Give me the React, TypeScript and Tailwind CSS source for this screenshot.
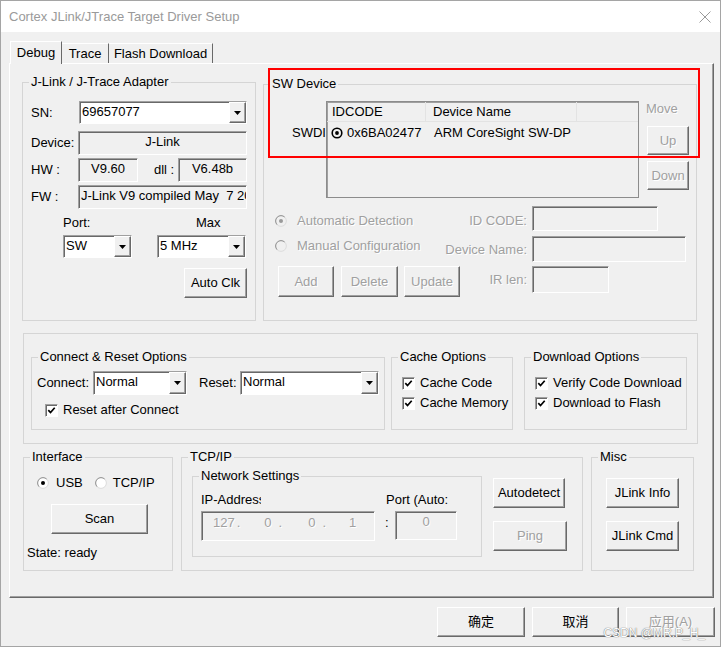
import React from 'react';

// classic win32 3D edges
const sunken = "border border-t-[#a0a0a0] border-l-[#a0a0a0] border-r-white border-b-white shadow-[inset_1px_1px_0_#696969]";
const raised = "border border-t-white border-l-white border-r-[#696969] border-b-[#696969] shadow-[inset_-1px_-1px_0_#a0a0a0]";
const grayText = "text-[#a0a0a0] [text-shadow:1px_1px_0_#ffffff]";

function Group({ title, className = '', children }: { title?: string; className?: string; children?: React.ReactNode }) {
  return (
    <div className={`relative shrink-0 border border-[#d5d5d5] ${className}`}>
      {title && (
        <span className="absolute -top-[9px] left-[6px] bg-[#f0f0f0] px-[2px] leading-[16px] whitespace-nowrap">{title}</span>
      )}
      {children}
    </div>
  );
}

function Btn({ label, className = '', disabled = false }: { label: string; className?: string; disabled?: boolean }) {
  return (
    <button type="button" className={`${raised} bg-[#f0f0f0] flex items-center justify-center shrink-0 leading-[16px] ${disabled ? grayText : 'text-black'} ${className}`}>
      {label}
    </button>
  );
}

function Combo({ value, className = '' }: { value: string; className?: string }) {
  return (
    <div className={`${sunken} bg-white flex shrink-0 h-[23px] ${className}`}>
      <span className="flex-1 pl-[2px] leading-[19px] whitespace-nowrap overflow-hidden">{value}</span>
      <span className={`${raised} bg-[#f0f0f0] w-[17px] flex items-center justify-center`}>
        <svg width="7" height="4" viewBox="0 0 7 4"><path d="M0 0h7L3.5 4z" fill="#000" /></svg>
      </span>
    </div>
  );
}

function Field({ children, className = '', center = false, disabled = false }: { children?: React.ReactNode; className?: string; center?: boolean; disabled?: boolean }) {
  return (
    <div className={`${sunken} bg-[#f0f0f0] shrink-0 flex items-center overflow-hidden whitespace-pre pb-[2px] ${center ? 'justify-center' : 'pl-[2px]'} ${disabled ? grayText : ''} ${className}`}>
      {children}
    </div>
  );
}

function Check({ label }: { label: string }) {
  return (
    <div className="flex items-center h-[14px]">
      <span className={`${sunken} bg-white w-[13px] h-[13px] flex items-center justify-center shrink-0`}>
        <svg width="9" height="9" viewBox="0 0 9 9"><path d="M1.3 4.2l2.2 2.3L7.7 1.8" stroke="#000" strokeWidth="1.7" fill="none" /></svg>
      </span>
      <span className="ml-[5px] leading-[16px] whitespace-nowrap">{label}</span>
    </div>
  );
}

function Radio({ checked = false, disabled = false }: { checked?: boolean; disabled?: boolean }) {
  return (
    <svg width="12" height="12" viewBox="0 0 12 12" className="shrink-0">
      <circle cx="6" cy="6" r="5.3" fill={disabled ? '#f0f0f0' : '#ffffff'} />
      <path d="M2.2 9.8A5.3 5.3 0 0 1 9.8 2.2" stroke="#8a8a8a" strokeWidth="1" fill="none" />
      <path d="M9.8 2.2A5.3 5.3 0 0 1 2.2 9.8" stroke="#dcdcdc" strokeWidth="1" fill="none" />
      {checked && <circle cx="6" cy="6" r="2" fill={disabled ? '#9a9a9a' : '#000'} />}
    </svg>
  );
}

export default function App() {
  return (
    <div className="w-[721px] h-[647px] bg-[#f0f0f0] border border-[#a5a5a5] flex flex-col relative overflow-hidden text-[13px] text-black font-['Liberation_Sans','Noto_Sans_CJK_SC',sans-serif]">
      {/* Title bar */}
      <div className="h-[31px] bg-white flex items-center pl-[8px] pr-[9px] shrink-0">
        <span className="text-[#9a9a9a] text-[13px]">Cortex JLink/JTrace Target Driver Setup</span>
        <svg className="ml-auto" width="12" height="12" viewBox="0 0 12 12">
          <path d="M0.5 0.5l11 11M11.5 0.5l-11 11" stroke="#9a9a9a" strokeWidth="1" />
        </svg>
      </div>

      {/* Tabs */}
      <div className="flex items-end h-[22px] mt-[9px] ml-[9px] relative z-10 shrink-0">
        <div className="w-[52px] h-[23px] -mb-[1px] bg-[#f0f0f0] border-t border-l border-r border-t-white border-l-white border-r-[#696969] flex items-center justify-center">Debug</div>
        <div className="w-[47px] h-[20px] bg-[#f0f0f0] border-t border-r border-t-white border-r-[#696969] flex items-center justify-center">Trace</div>
        <div className="w-[104px] h-[20px] bg-[#f0f0f0] border-t border-r border-t-white border-r-[#696969] flex items-center justify-center">Flash Download</div>
      </div>

      {/* Tab panel */}
      <div className="ml-[8px] w-[705px] h-[535px] shrink-0 border border-t-white border-l-white border-r-[#696969] border-b-[#696969] shadow-[inset_-1px_-1px_0_#a0a0a0] flex flex-col">
        <div className="flex pt-[18px] pl-[12px]">
          {/* J-Link adapter */}
          <Group title="J-Link / J-Trace Adapter" className="w-[234px] h-[239px]">
            <div className="flex flex-col">
              <div className="mt-[18px] flex items-center h-[23px]">
                <span className="pl-[8px] w-[56px]">SN:</span>
                <Combo value="69657077" className="w-[168px]" />
              </div>
              <div className="mt-[7px] flex items-center h-[24px]">
                <span className="pl-[8px] w-[55px]">Device:</span>
                <Field center className="w-[169px] h-[24px]">J-Link</Field>
              </div>
              <div className="mt-[3px] flex items-center h-[24px]">
                <span className="pl-[8px] w-[55px]">HW :</span>
                <Field center className="w-[60px] h-[24px]">V9.60</Field>
                <span className="ml-[16px] w-[24px]">dll :</span>
                <Field center className="w-[69px] h-[24px]">V6.48b</Field>
              </div>
              <div className="mt-[3px] flex items-center h-[24px]">
                <span className="pl-[8px] w-[55px]">FW :</span>
                <Field className="w-[169px] h-[24px]">J-Link V9 compiled May  7 2018</Field>
              </div>
              <div className="mt-[6px] flex h-[16px] leading-[16px]">
                <span className="ml-[40px] w-[133px]">Port:</span>
                <span>Max</span>
              </div>
              <div className="mt-[4px] flex h-[23px]">
                <Combo value="SW" className="ml-[40px] w-[69px]" />
                <Combo value="5 MHz" className="ml-[25px] w-[89px]" />
              </div>
              <Btn label="Auto Clk" className="mt-[10px] ml-[161px] w-[63px] h-[30px]" />
            </div>
          </Group>

          {/* SW device */}
          <Group title="SW Device" className="ml-[7px] mt-[2px] w-[434px] h-[237px]">
            <div className="flex mt-[16px]">
              <span className="pl-[28px] w-[62px] pt-[24px] leading-[16px] overflow-hidden whitespace-nowrap shrink-0">SWDI</span>
              <div className="w-[313px] h-[97px] shrink-0 border border-[#8c8c8c] shadow-[inset_1px_1px_0_#a0a0a0] flex flex-col">
                <div className="flex h-[20px] border-b border-[#e3e3e3] leading-[16px]">
                  <div className="w-[99px] border-r border-[#e3e3e3] pl-[5px] flex items-center">IDCODE</div>
                  <div className="w-[151px] border-r border-[#e3e3e3] pl-[7px] flex items-center">Device Name</div>
                  <div className="flex-1" />
                </div>
                <div className="flex h-[20px] mt-[1px] items-center">
                  <div className="w-[99px] pl-[4px] flex items-center">
                    <svg width="12" height="12" viewBox="0 0 12 12">
                      <circle cx="6" cy="6" r="4.8" stroke="#000" strokeWidth="1.6" fill="none" />
                      <circle cx="6" cy="6" r="1.9" fill="#000" />
                    </svg>
                    <span className="ml-[4px]">0x6BA02477</span>
                  </div>
                  <div className="pl-[8px]">ARM CoreSight SW-DP</div>
                </div>
              </div>
              <div className="ml-[8px] flex flex-col">
                <span className={`${grayText} leading-[16px] -ml-[1px]`}>Move</span>
                <Btn disabled label="Up" className="mt-[9px] w-[42px] h-[29px]" />
                <Btn disabled label="Down" className="mt-[6px] w-[42px] h-[29px]" />
              </div>
            </div>
            <div className="flex">
              <div className="flex flex-col pl-[11px] mt-[13px] w-[196px] shrink-0">
                <div className="flex items-center h-[20px]">
                  <Radio checked disabled />
                  <span className={`ml-[10px] whitespace-nowrap ${grayText}`}>Automatic Detection</span>
                </div>
                <div className="flex items-center h-[20px] mt-[5px]">
                  <Radio disabled />
                  <span className={`ml-[10px] whitespace-nowrap ${grayText}`}>Manual Configuration</span>
                </div>
                <div className="flex mt-[10px]">
                  <Btn disabled label="Add" className="ml-[3px] w-[56px] h-[31px]" />
                  <Btn disabled label="Delete" className="ml-[7px] w-[57px] h-[31px]" />
                  <Btn disabled label="Update" className="ml-[6px] w-[56px] h-[31px]" />
                </div>
              </div>
              <div className="flex flex-col mt-[8px]">
                <div className="flex items-center h-[25px]">
                  <span className={`w-[67px] flex justify-end whitespace-nowrap pt-[4px] ${grayText}`}>ID CODE:</span>
                  <Field className="ml-[5px] w-[126px] h-[25px]" />
                </div>
                <div className="flex items-center h-[26px] mt-[5px]">
                  <span className={`w-[67px] flex justify-end whitespace-nowrap pt-[2px] ${grayText}`}>Device Name:</span>
                  <Field className="ml-[5px] w-[154px] h-[26px]" />
                </div>
                <div className="flex items-center h-[27px] mt-[4px]">
                  <span className={`w-[67px] flex justify-end whitespace-nowrap ${grayText}`}>IR len:</span>
                  <Field className="ml-[5px] w-[77px] h-[27px]" />
                </div>
              </div>
            </div>
          </Group>
        </div>

        {/* middle options */}
        <div className="mt-[12px] ml-[13px] w-[675px] h-[111px] shrink-0 border border-[#d5d5d5] flex items-start pt-[23px] pl-[7px]">
          <Group title="Connect & Reset Options" className="w-[354px] h-[73px]">
            <div className="flex items-center h-[24px] mt-[13px] pl-[5px]">
              <span className="w-[56px]">Connect:</span>
              <Combo value="Normal" className="w-[94px] h-[24px]" />
              <span className="ml-[12px] w-[41px]">Reset:</span>
              <Combo value="Normal" className="w-[139px] h-[24px]" />
            </div>
            <div className="mt-[8px] pl-[13px]">
              <Check label="Reset after Connect" />
            </div>
          </Group>
          <Group title="Cache Options" className="ml-[6px] w-[122px] h-[73px]">
            <div className="flex flex-col gap-[6px] mt-[18px] pl-[10px]">
              <Check label="Cache Code" />
              <Check label="Cache Memory" />
            </div>
          </Group>
          <Group title="Download Options" className="ml-[11px] w-[163px] h-[73px]">
            <div className="flex flex-col gap-[6px] mt-[18px] pl-[10px]">
              <Check label="Verify Code Download" />
              <Check label="Download to Flash" />
            </div>
          </Group>
        </div>

        {/* bottom row */}
        <div className="flex items-start mt-[13px] pl-[13px]">
          <Group title="Interface" className="w-[150px] h-[114px]">
            <div className="flex items-center h-[14px] mt-[18px] pl-[13px]">
              <Radio checked />
              <span className="ml-[7px]">USB</span>
              <span className="ml-[12px] flex"><Radio /></span>
              <span className="ml-[6px]">TCP/IP</span>
            </div>
            <Btn label="Scan" className="mt-[14px] ml-[27px] w-[97px] h-[30px]" />
            <div className="mt-[11px] pl-[3px] leading-[16px]">State: ready</div>
          </Group>
          <Group title="TCP/IP" className="ml-[8px] w-[402px] h-[114px]">
            <div className="flex items-start">
              <Group title="Network Settings" className="ml-[10px] mt-[18px] w-[290px] h-[81px]">
                <div className="flex">
                  <div className="flex flex-col ml-[8px]">
                    <span className="mt-[15px] w-[60px] leading-[16px] overflow-hidden whitespace-nowrap">IP-Address</span>
                    <div className={`${sunken} bg-[#f0f0f0] mt-[3px] w-[174px] h-[30px] flex items-start pt-[3px] pl-[11px] leading-[16px] ${grayText}`}>
                      <span>127</span>
                      <span className="ml-[2px]">.</span>
                      <span className="ml-[24px]">0</span>
                      <span className="ml-[7px]">.</span>
                      <span className="ml-[26px]">0</span>
                      <span className="ml-[7px]">.</span>
                      <span className="ml-[23px]">1</span>
                    </div>
                  </div>
                  <div className="flex flex-col ml-[10px]">
                    <span className="mt-[15px] leading-[16px] whitespace-nowrap pl-[1px]">Port (Auto:</span>
                    <div className="flex mt-[3px]">
                      <span className="w-[10px] pt-[4px] leading-[16px]">:</span>
                      <div className={`${sunken} bg-[#f0f0f0] w-[62px] h-[29px] flex justify-center pt-[2px] leading-[16px] ${grayText}`}>0</div>
                    </div>
                  </div>
                </div>
              </Group>
              <div className="flex flex-col ml-[11px] mt-[20px]">
                <Btn label="Autodetect" className="w-[72px] h-[30px]" />
                <Btn disabled label="Ping" className="mt-[13px] w-[74px] h-[30px]" />
              </div>
            </div>
          </Group>
          <Group title="Misc" className="ml-[8px] w-[103px] h-[114px]">
            <div className="flex flex-col ml-[14px] mt-[20px]">
              <Btn label="JLink Info" className="w-[73px] h-[30px]" />
              <Btn label="JLink Cmd" className="mt-[13px] w-[73px] h-[30px]" />
            </div>
          </Group>
        </div>
      </div>

      {/* dialog buttons */}
      <div className="flex justify-end gap-[7px] mt-[9px] pr-[5px]">
        <Btn label="确定" className="w-[88px] h-[30px]" />
        <Btn label="取消" className="w-[87px] h-[30px]" />
        <Btn disabled label="应用(A)" className="w-[89px] h-[30px]" />
      </div>

      {/* red annotation box over the SW device list */}
      <div className="absolute left-[267px] top-[67px] w-[432px] h-[90px] border-2 border-[#ff0000] pointer-events-none z-20" />

      <span className="absolute right-[15px] bottom-[6px] text-[12px] leading-[14px] text-white [text-shadow:0_0_1px_#7a7a7a,0_0_1px_#7a7a7a]">CSDN @MR.P_H_</span>
    </div>
  );
}
